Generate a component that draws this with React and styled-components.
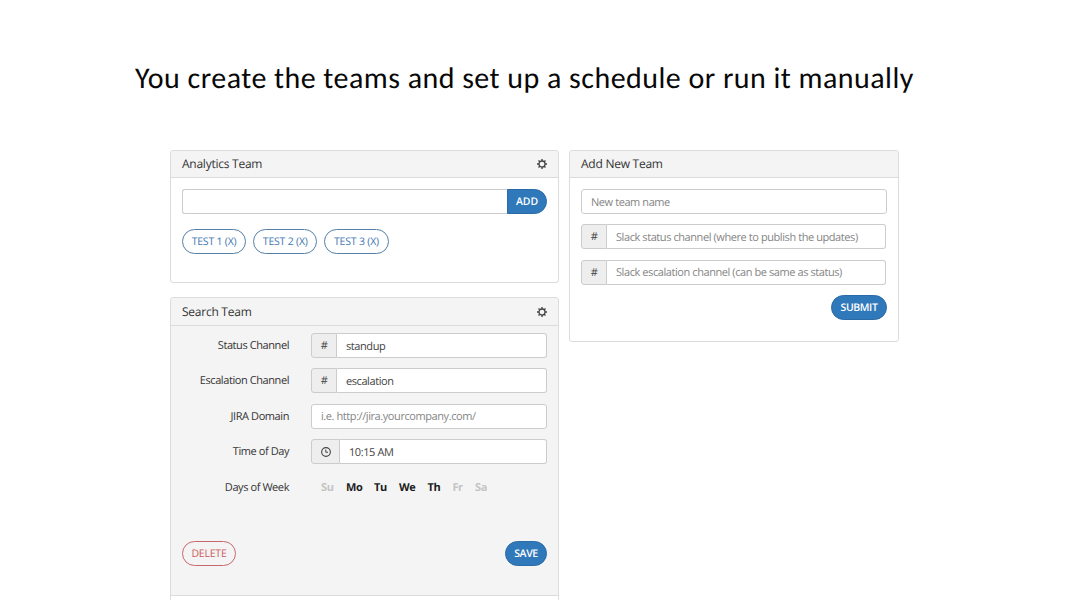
import React from "react";
import styled, { createGlobalStyle, css } from "styled-components";

const GlobalStyle = createGlobalStyle`
  * {
    box-sizing: border-box;
  }
  body {
    margin: 0;
    background-color: white;
    overflow: hidden;
    text-rendering: geometricPrecision;
  }
`;

const DAYS = [
  { label: "Su", active: false, width: 13 },
  { label: "Mo", active: true, width: 16 },
  { label: "Tu", active: true, width: 13 },
  { label: "We", active: true, width: 16.5 },
  { label: "Th", active: true, width: 13 },
  { label: "Fr", active: false, width: 10.5 },
  { label: "Sa", active: false, width: 12 },
];

const TESTS = ["TEST 1 (X)", "TEST 2 (X)", "TEST 3 (X)"];

const GearIcon = () => (
  <svg width="10" height="10" viewBox="0 0 20 20">
    <g stroke="#444" fill="none">
      <circle cx="10" cy="10" r="6" strokeWidth="2.6" />
      <path
        d="M10 0v4M10 16v4M0 10h4M16 10h4M3 3l2.6 2.6M14.4 14.4l2.6 2.6M3 17l2.6-2.6M14.4 5.6l2.6-2.6"
        strokeWidth="2.8"
      />
    </g>
  </svg>
);

const ClockIcon = () => (
  <svg width="10" height="10" viewBox="0 0 20 20">
    <g stroke="#444" fill="none" strokeWidth="2.2">
      <circle cx="10" cy="10" r="8.7" />
      <path d="M9.5 5v5.5h4.5" strokeWidth="2" />
    </g>
  </svg>
);

const Field = ({ addon, value, placeholder, wide }) => (
  <InputGroup>
    {addon && <Addon $wide={wide}>{addon}</Addon>}
    <Input
      $joined={!!addon}
      defaultValue={value}
      placeholder={placeholder}
      spellCheck={false}
    />
  </InputGroup>
);

const App = () => {
  return (
    <Slide>
      <GlobalStyle />
      <Title>You create the teams and set up a schedule or run it manually</Title>
      <Columns>
        <MainColumn>
          <Panel $height={133}>
            <PanelHeader>
              <PanelTitle>Analytics Team</PanelTitle>
              <GearIcon />
            </PanelHeader>
            <PanelBody>
              <InputGroup>
                <Input $open />
                <AddButton>ADD</AddButton>
              </InputGroup>
              <Pills>
                {TESTS.map((test) => (
                  <Pill key={test}>{test}</Pill>
                ))}
              </Pills>
            </PanelBody>
          </Panel>
          <Panel $gray $height={360}>
            <PanelHeader $tall>
              <PanelTitle>Search Team</PanelTitle>
              <GearIcon />
            </PanelHeader>
            <Settings>
              <FormRow>
                <Label>Status Channel</Label>
                <Field addon="#" value="standup" />
              </FormRow>
              <FormRow>
                <Label>Escalation Channel</Label>
                <Field addon="#" value="escalation" />
              </FormRow>
              <FormRow>
                <Label>JIRA Domain</Label>
                <Field placeholder="i.e. http://jira.yourcompany.com/" />
              </FormRow>
              <FormRow>
                <Label>Time of Day</Label>
                <Field addon={<ClockIcon />} value="10:15 AM" wide />
              </FormRow>
              <FormRow>
                <Label>Days of Week</Label>
                <Days>
                  {DAYS.map(({ label, active, width }) => (
                    <Day key={label} $active={active} $width={width}>
                      {label}
                    </Day>
                  ))}
                </Days>
              </FormRow>
              <Actions>
                <DeleteButton>DELETE</DeleteButton>
                <SaveButton>SAVE</SaveButton>
              </Actions>
            </Settings>
            <NextSection />
          </Panel>
        </MainColumn>
        <SideColumn>
          <Panel $height={192}>
            <PanelHeader>
              <PanelTitle>Add New Team</PanelTitle>
            </PanelHeader>
            <PanelBody>
              <NewTeamForm>
                <Field placeholder="New team name" />
                <Field
                  addon="#"
                  placeholder="Slack status channel (where to publish the updates)"
                />
                <Field
                  addon="#"
                  placeholder="Slack escalation channel (can be same as status)"
                />
                <SubmitButton>SUBMIT</SubmitButton>
              </NewTeamForm>
            </PanelBody>
          </Panel>
        </SideColumn>
      </Columns>
    </Slide>
  );
};

export default App;

const Slide = styled.div`
  width: 1066px;
  height: 600px;
  overflow: hidden;
  font-family: "Open Sans", "Noto Sans", sans-serif;
  font-size: 11px;
  letter-spacing: -0.42px;
  color: #333;
`;

const Title = styled.h1`
  margin: 0;
  padding: 59px 0 0 135px;
  height: 150px;
  font-family: Carlito, Calibri, "Open Sans", sans-serif;
  font-size: 30px;
  font-weight: 400;
  line-height: 40px;
  letter-spacing: 0.46px;
  white-space: nowrap;
  color: #080808;
`;

const Columns = styled.div`
  display: flex;
  align-items: flex-start;
  gap: 10px;
  padding-left: 170px;
`;

const MainColumn = styled.div`
  display: flex;
  flex-direction: column;
  gap: 14px;
  width: 389px;
`;

const SideColumn = styled.div`
  width: 330px;
`;

const Panel = styled.section`
  height: ${(props) => props.$height}px;
  border: 1px solid #dcdcdc;
  border-radius: 3px;
  background-color: ${(props) => (props.$gray ? "#f4f4f4" : "white")};
  overflow: hidden;
`;

const PanelHeader = styled.header`
  display: flex;
  align-items: center;
  justify-content: space-between;
  height: ${(props) => (props.$tall ? 28 : 27)}px;
  padding: 0 11px;
  border-bottom: 1px solid #dcdcdc;
  background-color: #f4f4f4;
`;

const PanelTitle = styled.h2`
  margin: 0;
  font-size: 12px;
  font-weight: 400;
  line-height: 26px;
  letter-spacing: -0.25px;
`;

const PanelBody = styled.div`
  padding: 11px 11px 0;
`;

const InputGroup = styled.div`
  display: flex;
  flex: 1;
  height: 25px;
`;

const Input = styled.input`
  flex: 1;
  min-width: 0;
  height: 25px;
  padding: 1px 8px 0 9px;
  border: 1px solid #ccc;
  border-radius: 3px;
  background-color: white;
  font: inherit;
  letter-spacing: inherit;
  color: #444;
  outline: none;
  text-rendering: inherit;
  &::placeholder {
    color: #858585;
    opacity: 1;
  }
  ${(props) =>
    props.$joined &&
    css`
      border-left: none;
      border-radius: 0 3px 3px 0;
    `}
  ${(props) =>
    props.$open &&
    css`
      border-right: none;
      border-radius: 3px 0 0 3px;
    `}
`;

const Addon = styled.span`
  display: flex;
  align-items: center;
  justify-content: center;
  width: ${(props) => (props.$wide ? 29 : 26)}px;
  border: 1px solid #ccc;
  border-radius: 3px 0 0 3px;
  background-color: #eee;
  color: #444;
`;

const Button = styled.button`
  height: 25px;
  padding: 1px 0 0;
  border: 1px solid #2a6ba8;
  border-radius: 13px;
  background-color: #2f78ba;
  color: white;
  font: inherit;
  font-size: 10.5px;
  font-weight: 600;
  letter-spacing: -0.4px;
  white-space: nowrap;
  text-rendering: inherit;
`;

const AddButton = styled(Button)`
  width: 40px;
  border-radius: 0 13px 13px 0;
  letter-spacing: -0.1px;
`;

const SaveButton = styled(Button)`
  width: 42px;
`;

const SubmitButton = styled(Button)`
  width: 56px;
  align-self: flex-end;
`;

const DeleteButton = styled(Button)`
  width: 54px;
  border-color: #c9686b;
  background-color: transparent;
  color: #cb5a5c;
  font-weight: 400;
  letter-spacing: -0.2px;
`;

const Pills = styled.div`
  display: flex;
  gap: 7px;
  padding-top: 15px;
`;

const Pill = styled(Button)`
  width: 64.2px;
  border-color: #5580a8;
  background-color: white;
  color: #3f78b0;
  font-weight: 400;
  letter-spacing: -0.2px;
`;

const Settings = styled.div`
  display: flex;
  flex-direction: column;
  gap: 10.4px;
  height: 269px;
  padding: 7px 11px 0;
`;

const FormRow = styled.div`
  display: flex;
  height: 25px;
`;

const Label = styled.label`
  width: 107px;
  margin-right: 22px;
  text-align: right;
  line-height: 26px;
`;

const Days = styled.div`
  display: flex;
  align-items: center;
  gap: 12px;
  padding: 1px 0 0 10px;
  font-weight: 700;
`;

const Day = styled.span`
  width: ${(props) => props.$width}px;
  color: ${(props) => (props.$active ? "#1c1c1c" : "#c4c4c4")};
`;

const Actions = styled.div`
  display: flex;
  justify-content: space-between;
  padding-top: 31px;
`;

const NextSection = styled.div`
  height: 60px;
  border-top: 1px solid #dcdcdc;
  background-color: white;
`;

const NewTeamForm = styled.form`
  display: flex;
  flex-direction: column;
  gap: 10.4px;
  & > div {
    flex: none;
  }
  & > div:not(:first-child) {
    margin-right: 1px;
  }
`;
